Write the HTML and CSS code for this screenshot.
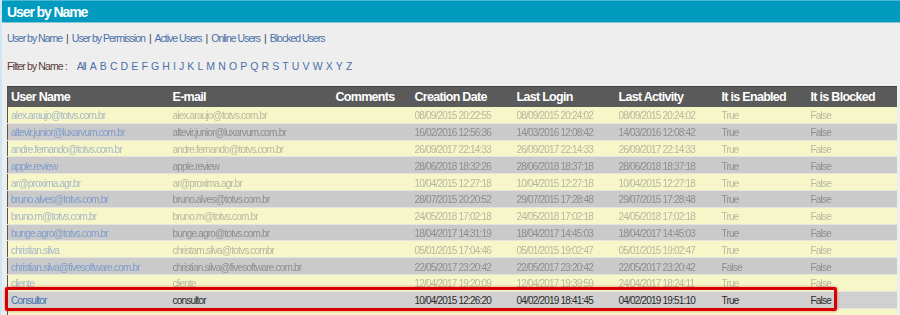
FILE: index.html
```html
<!DOCTYPE html>
<html lang="en">
<head>
    <meta charset="UTF-8">
    <title>User by Name</title>
    <link rel="stylesheet" href="styles.css">
</head>
<body>
    <div class="page">
        <div class="title-bar">User by Name</div>
        <div class="content">
            <div class="nav-links">
                <a href="#">User by Name</a><span class="sep">|</span><a href="#">User by Permission</a><span class="sep">|</span><a href="#">Active Users</a><span class="sep">|</span><a href="#">Online Users</a><span class="sep">|</span><a href="#">Blocked Users</a>
            </div>
            <div class="filter">
                <span class="filter-label">Filter by Name :</span>
                <span class="letters">
                    <a href="#">All</a><a href="#">A</a><a href="#">B</a><a href="#">C</a><a href="#">D</a><a href="#">E</a><a href="#">F</a><a href="#">G</a><a href="#">H</a><a href="#">I</a><a href="#">J</a><a href="#">K</a><a href="#">L</a><a href="#">M</a><a href="#">N</a><a href="#">O</a><a href="#">P</a><a href="#">Q</a><a href="#">R</a><a href="#">S</a><a href="#">T</a><a href="#">U</a><a href="#">V</a><a href="#">W</a><a href="#">X</a><a href="#">Y</a><a href="#">Z</a>
                </span>
            </div>
            <div class="grid-wrap">
                <table class="users">
                    <colgroup>
                        <col style="width:162px"><col style="width:163px"><col style="width:79px"><col style="width:102px">
                        <col style="width:102px"><col style="width:103px"><col style="width:89px"><col>
                    </colgroup>
                    <thead>
                        <tr>
                            <th>User Name</th><th>E-mail</th><th>Comments</th><th>Creation Date</th>
                            <th>Last Login</th><th>Last Activity</th><th>It is Enabled</th><th>It is Blocked</th>
                        </tr>
                    </thead>
                    <tbody>
                        <tr class="odd faded"><td><a href="#">alex.araujo@totvs.com.br</a></td><td>alex.araujo@totvs.com.br</td><td></td><td>08/09/2015 20:22:55</td><td>08/09/2015 20:24:02</td><td>08/09/2015 20:24:02</td><td>True</td><td>False</td></tr>
                        <tr class="even faded"><td><a href="#">altevir.junior@luxarvum.com.br</a></td><td>altevir.junior@luxarvum.com.br</td><td></td><td>16/02/2016 12:56:36</td><td>14/03/2016 12:08:42</td><td>14/03/2016 12:08:42</td><td>True</td><td>False</td></tr>
                        <tr class="odd faded"><td><a href="#">andre.fernando@totvs.com.br</a></td><td>andre.fernando@totvs.com.br</td><td></td><td>26/09/2017 22:14:33</td><td>26/09/2017 22:14:33</td><td>26/09/2017 22:14:33</td><td>True</td><td>False</td></tr>
                        <tr class="even faded"><td><a href="#">apple.review</a></td><td>apple.review</td><td></td><td>28/06/2018 18:32:26</td><td>28/06/2018 18:37:18</td><td>28/06/2018 18:37:18</td><td>True</td><td>False</td></tr>
                        <tr class="odd faded"><td><a href="#">ar@proxima.agr.br</a></td><td>ar@proxima.agr.br</td><td></td><td>10/04/2015 12:27:18</td><td>10/04/2015 12:27:18</td><td>10/04/2015 12:27:18</td><td>True</td><td>False</td></tr>
                        <tr class="even faded"><td><a href="#">bruno.alves@totvs.com.br</a></td><td>bruno.alves@totvs.com.br</td><td></td><td>28/07/2015 20:20:52</td><td>29/07/2015 17:28:48</td><td>29/07/2015 17:28:48</td><td>True</td><td>False</td></tr>
                        <tr class="odd faded"><td><a href="#">bruno.m@totvs.com.br</a></td><td>bruno.m@totvs.com.br</td><td></td><td>24/05/2018 17:02:18</td><td>24/05/2018 17:02:18</td><td>24/05/2018 17:02:18</td><td>True</td><td>False</td></tr>
                        <tr class="even faded"><td><a href="#">bunge.agro@totvs.com.br</a></td><td>bunge.agro@totvs.com.br</td><td></td><td>18/04/2017 14:31:19</td><td>18/04/2017 14:45:03</td><td>18/04/2017 14:45:03</td><td>True</td><td>False</td></tr>
                        <tr class="odd faded"><td><a href="#">christian.silva</a></td><td>christam.silva@totvs.combr</td><td></td><td>05/01/2015 17:04:46</td><td>05/01/2015 19:02:47</td><td>05/01/2015 19:02:47</td><td>True</td><td>False</td></tr>
                        <tr class="even faded"><td><a href="#">christian.silva@fivesoftware.com.br</a></td><td>christian.silva@fivesoftware.com.br</td><td></td><td>22/05/2017 23:20:42</td><td>22/05/2017 23:20:42</td><td>22/05/2017 23:20:42</td><td>False</td><td>False</td></tr>
                        <tr class="odd faded"><td><a href="#">cliente</a></td><td>cliente</td><td></td><td>12/04/2017 19:20:09</td><td>12/04/2017 19:39:59</td><td>24/04/2017 18:24:11</td><td>True</td><td>False</td></tr>
                        <tr class="even selected"><td><a href="#">Consultor</a></td><td>consultor</td><td></td><td>10/04/2015 12:26:20</td><td>04/02/2019 18:41:45</td><td>04/02/2019 19:51:10</td><td>True</td><td>False</td></tr>
                        <tr class="odd faded"><td></td><td></td><td></td><td></td><td></td><td></td><td></td><td></td></tr>
                    </tbody>
                </table>
                <!-- red annotation around the Consultor row -->
                <div class="highlight"></div>
            </div>
        </div>
    </div>
</body>
</html>
```

FILE: styles.css
```css
body {
    margin: 0;
    font-family: 'Liberation Sans', Arial, sans-serif;
    background: #eeeeee;
    overflow: hidden;
}

.page {
    border-left: 2px solid #cde8f1;
    height: 315px;
}

.title-bar {
    background: #009bbf;
    color: #fff;
    font-weight: bold;
    font-size: 14px;
    letter-spacing: -1.1px;
    height: 23px;
    line-height: 22px;
    padding-left: 5px;
    border-top: 1px solid #4fb8d2;
    border-bottom: 1px solid #8ac7d6;
    box-sizing: border-box;
}

.content {
    padding: 0 2px 0 5px;
}

.nav-links {
    font-size: 10.5px;
    letter-spacing: -1px;
    padding-top: 9px;
    height: 20px;
    line-height: 12px;
}

.nav-links a,
.letters a {
    color: #4a70a8;
    text-decoration: none;
}

.nav-links .sep {
    color: #444;
    margin: 0 4px;
}

.filter {
    font-size: 10.5px;
    letter-spacing: -0.9px;
    margin-top: 8px;
    display: flex;
    line-height: 12px;
}

.filter-label {
    color: #5a3c3c;
    margin-right: 10px;
}

.letters {
    display: flex;
    gap: 4px;
}

.grid-wrap {
    position: relative;
    margin-top: 14px;
}

.users {
    width: 890px;
    border-collapse: collapse;
    table-layout: fixed;
    border-left: 1px solid #555;
}

.users th {
    background: #5a5a5a;
    color: #fff;
    font-size: 12.5px;
    letter-spacing: -0.7px;
    text-align: left;
    height: 20px;
    padding: 0 0 0 3px;
    border-top: 1px solid #3f3f3f;
    white-space: nowrap;
}

.users td {
    font-size: 10px;
    letter-spacing: -0.8px;
    height: 13.8px;
    padding: 2px 0 0 3px;
    border-bottom: 1px solid #e4e4dc;
    white-space: nowrap;
    overflow: hidden;
    color: #333;
}

.users td a {
    color: #3e6eb0;
    text-decoration: none;
}

.users tr.odd td {
    background: #f6f6c8;
}

.users tr.even td {
    background: #cacaca;
}

.users tr.faded td {
    filter: blur(0.6px);
}

.users tr.odd.faded td {
    color: #b8b8a0;
}

.users tr.odd.faded td a {
    color: #a6b8c8;
}

.users tr.even.faded td {
    color: #8e8e8e;
}

.users tr.even.faded td a {
    color: #7f9ccb;
}

.users tr.selected td {
    background: #d0d0d0;
    color: #2a2a2a;
}

.highlight {
    position: absolute;
    left: -2px;
    top: 201px;
    width: 826px;
    height: 18px;
    border: 3px solid #d60000;
    border-radius: 2px;
    box-shadow: 0 0 3px rgba(210, 0, 0, 0.5);
}
```
